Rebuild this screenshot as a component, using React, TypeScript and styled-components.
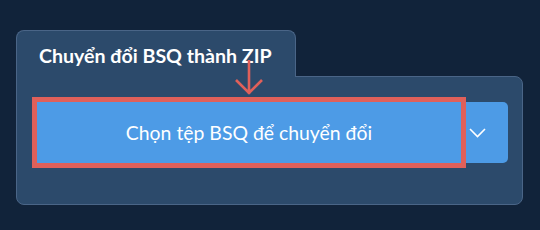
import styled, { createGlobalStyle } from "styled-components";

const GlobalStyle = createGlobalStyle`
  html, body {
    margin: 0;
    padding: 0;
    background: #11233a;
  }

  body {
    font-family: Lato, "Noto Sans", sans-serif;
    color: #ffffff;
  }
`;

const Page = styled.div`
  position: relative;
  width: 540px;
  height: 230px;
  box-sizing: border-box;
  padding: 30px 17px 0 16px;
`;

const Tab = styled.div`
  position: relative;
  z-index: 1;
  display: inline-flex;
  align-items: center;
  box-sizing: border-box;
  height: 47px;
  padding: 3px 22px 0 22px;
  margin-bottom: -1px;
  width: 280px;
  background: #2c4a6b;
  border: 1px solid #4a6587;
  border-bottom: none;
  border-radius: 8px 8px 0 0;
  font-size: 19.6px;
  font-weight: 700;
  white-space: nowrap;
`;

const Panel = styled.div`
  box-sizing: border-box;
  height: 129px;
  padding: 25px 14px 0 20px;
  background: #2c4a6b;
  border: 1px solid #4a6587;
  border-radius: 0 8px 8px 8px;
`;

const ButtonRow = styled.div`
  display: flex;
  height: 61px;
`;

const MainButton = styled.button`
  position: relative;
  z-index: 1;
  flex: 1;
  border: none;
  margin: 0;
  padding: 0;
  background: #4d9be6;
  color: #ffffff;
  font-family: Lato, "Noto Sans", sans-serif;
  font-size: 19.4px;
  font-weight: 400;
  border-radius: 0;
  outline: 5px solid #e0605a;
  outline-offset: 0;
  cursor: pointer;
`;

const MenuButton = styled.button`
  width: 47px;
  display: flex;
  align-items: center;
  justify-content: flex-start;
  padding: 0 0 0 8px;
  margin: 0;
  border: none;
  background: #4d9be6;
  border-radius: 0 5px 5px 0;
  cursor: pointer;
`;

const Pointer = styled.svg`
  position: absolute;
  left: 233px;
  top: 59px;
  z-index: 2;
`;

export default function App() {
  return (
    <>
      <GlobalStyle />
      <Page>
        <Tab>Chuyển đổi BSQ thành ZIP</Tab>
        <Panel>
          <ButtonRow>
            <MainButton>Chọn tệp BSQ để chuyển đổi</MainButton>
            <MenuButton aria-label="Thêm tùy chọn">
              <svg width="17" height="10" viewBox="0 0 17 10">
                <path
                  d="M1 1 L8.5 8.5 L16 1"
                  fill="none"
                  stroke="#ffffff"
                  strokeWidth="1.6"
                />
              </svg>
            </MenuButton>
          </ButtonRow>
        </Panel>
        <Pointer width="32" height="37" viewBox="0 0 32 37">
          <path
            d="M16 1 L16 35 M3 21 L16 34 L29 21"
            fill="none"
            stroke="#e0605a"
            strokeWidth="2.6"
          />
        </Pointer>
      </Page>
    </>
  );
}
